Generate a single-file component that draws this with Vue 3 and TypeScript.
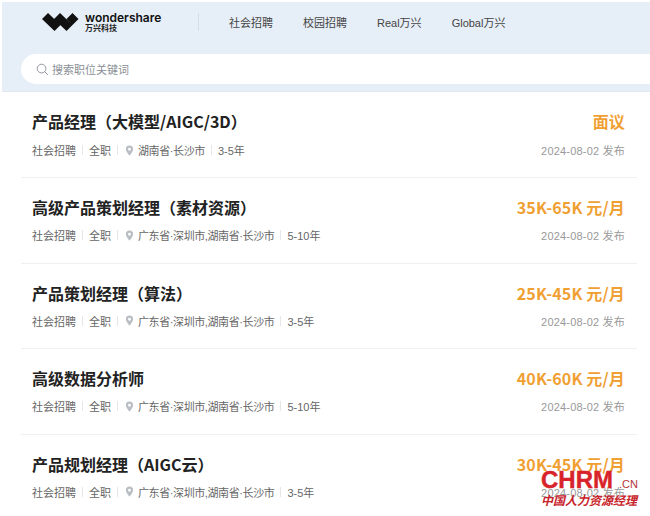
<template>
  <div class="page">
    <header class="top">
      <div class="nav">
        <div class="logo">
          <svg class="logo-mark" viewBox="0 0 37 18">
            <path d="M0 6 6 0l12.500 12-6 6zM12 6l6-6 12.500 12-6 6zM24.500 6l6-6 6 6-6 6z" fill="#111" />
          </svg>
          <div class="logo-text">
            <b class="logo-en">wondershare</b>
            <b class="logo-cn">万兴科技</b>
          </div>
        </div>
        <span class="nav-line"></span>
        <a v-for="n in navs" :key="n" class="nav-item">{{ n }}</a>
      </div>
      <div class="search">
        <svg class="search-icon" viewBox="0 0 14 14"><circle cx="6" cy="6" r="4.700" stroke="currentColor" fill="none"/><path d="M9.500 9.500l3 3" stroke="currentColor" stroke-linecap="round"/></svg>
        <span>搜索职位关键词</span>
      </div>
    </header>

    <ul class="list">
      <li v-for="job in jobs" :key="job.title" class="job">
        <div class="row">
          <h3 class="title">{{ job.title }}</h3>
          <span class="salary">{{ job.salary }}</span>
        </div>
        <div class="row meta-row">
          <div class="meta">
            <span>社会招聘</span><i></i>
            <span>全职</span><i class="before-pin"></i>
            <svg class="pin" viewBox="0 0 10 12"><path fill-rule="evenodd" d="M5 .5a4 4 0 0 0-4 4c0 2.800 4 7 4 7s4-4.200 4-7a4 4 0 0 0-4-4zM5 3a1.600 1.600 0 1 1 0 3.200A1.600 1.600 0 0 1 5 3z" fill="#b9bec4"/></svg>
            <span class="city">{{ job.city }}</span><i></i>
            <span>{{ job.years }}</span>
          </div>
          <span class="date">2024-08-02 发布</span>
        </div>
      </li>
    </ul>

    <div class="mark">
      <div class="mark-en">CHRM<small>.CN</small></div>
      <div class="mark-cn">中国人力资源经理</div>
    </div>
  </div>
</template>

<script setup lang="ts">
const navs = ['社会招聘', '校园招聘', 'Real万兴', 'Global万兴']

const jobs = [
  { title: '产品经理（大模型/AIGC/3D）', salary: '面议', city: '湖南省·长沙市', years: '3-5年' },
  { title: '高级产品策划经理（素材资源）', salary: '35K-65K 元/月', city: '广东省·深圳市,湖南省·长沙市', years: '5-10年' },
  { title: '产品策划经理（算法）', salary: '25K-45K 元/月', city: '广东省·深圳市,湖南省·长沙市', years: '3-5年' },
  { title: '高级数据分析师', salary: '40K-60K 元/月', city: '广东省·深圳市,湖南省·长沙市', years: '5-10年' },
  { title: '产品规划经理（AIGC云）', salary: '30K-45K 元/月', city: '广东省·深圳市,湖南省·长沙市', years: '3-5年' },
]
</script>

<style>
html, body { margin: 0; background: #fff; overflow: hidden; }
</style>

<style scoped>
.page {
  position: relative; width: 650px; height: 516px; overflow: hidden; background: #fff;
  font-family: "Liberation Sans", "Noto Sans CJK SC", sans-serif; color: #333;
}
.top { margin: 2px 0 0 2px; height: 90px; background: #e6eef7; box-sizing: border-box; border-bottom: 1px solid #e3e8ee; }
.nav { display: flex; align-items: center; height: 40px; margin-bottom: 12px; padding-left: 40px; }
.logo { display: flex; align-items: center; gap: 6px; width: 156px; flex: none; }
.logo-mark { width: 37px; height: 18px; }
.logo-text { display: flex; flex-direction: column; }
.logo-en { font: 600 12px/11px Inter, sans-serif; color: #111; }
.logo-cn { font: 700 8px/9px "Noto Sans CJK SC", sans-serif; color: #222; }
.nav-line { width: 1px; height: 18px; background: #d5dde6; margin-right: 30px; }
.nav-item { font-size: 11px; color: #444; margin-right: 30px; }
.search {
  display: flex; align-items: center; gap: 3px; margin-left: 19px; height: 30px;
  padding-left: 15px; background: #fff; border-radius: 15px 0 0 15px;
  font-size: 11px; color: #8a8f96;
}
.search-icon { width: 13px; height: 13px; color: #8a8f96; }

.list { margin: 0; padding: 0; list-style: none; }
.job { height: 85.500px; margin: 0 13px 0 21px; padding: 0 12px 0 11px; box-sizing: border-box; border-bottom: 1px solid #f0f0f0; }
.job:first-child { height: 86px; }
.row { display: flex; justify-content: space-between; align-items: center; }
.title { margin: 0; padding-top: 18px; font: 700 16px/22px "Noto Sans CJK SC", sans-serif; color: #222; }
.salary { padding-top: 18px; font: 700 16px/22px "Noto Sans CJK SC", sans-serif; letter-spacing: 0.15px; color: #f0a033; }
.meta-row { margin-top: 8px; height: 18px; }
.job:first-child .meta-row { margin-top: 9px; }
.meta { display: flex; align-items: center; font-size: 11px; color: #666; }
.meta i { width: 1px; height: 10px; background: #e6e6e6; margin: 0 6px; }
.meta i.before-pin { margin-right: 7px; }
.pin { width: 9px; height: 11px; margin-right: 4px; }
.city { letter-spacing: -0.4px; }
.date { font-size: 11px; letter-spacing: 0.2px; color: #999; }

.mark { position: absolute; left: 541px; top: 470px; width: 96px; color: #d8232a; }
.mark-en { font: 700 24px/20px "Liberation Sans", sans-serif; white-space: nowrap; -webkit-text-stroke: 0.4px #d8232a; }
.mark-en small { font-size: 11px; font-weight: 400; margin-left: 6px; color: #b5343a; -webkit-text-stroke: 0; }
.mark-cn { font: italic 700 12px/14px "Noto Sans CJK SC", sans-serif; white-space: nowrap; margin-top: -1px; color: #c8232a; }
</style>
